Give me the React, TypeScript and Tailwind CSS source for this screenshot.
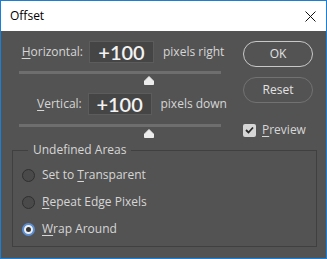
import { useState } from "react"

const Thumb = () => (
    <svg width="10" height="9" viewBox="0 0 10 9" className="block">
        <path d="M5 0.5 L9.5 5 L9.5 8.5 L0.5 8.5 L0.5 5 Z" fill="#ececec" stroke="#ececec" strokeWidth="1" strokeLinejoin="round" />
    </svg>
)

const OffsetRow = ({ label, hot, unit }: { label: string; hot: string; unit: string }) => (
    <div className="flex items-center h-[22px] whitespace-nowrap">
        <span className="w-[63px] text-right text-[12px] text-[#d6d6d6]">
            <span className="underline underline-offset-2">{hot}</span>
            {label}
        </span>
        <div className="ml-[6px] w-[65px] h-[22px] bg-[#454545] border border-[#5c5c5c] flex items-center justify-center text-[20px] leading-none font-semibold text-[#f2f2f2] [font-family:Lato,sans-serif]">
            +100
        </div>
        <span className="ml-[9px] text-[12px] text-[#d6d6d6]">{unit}</span>
    </div>
)

const Slider = () => (
    <div className="flex flex-col">
        <div className="h-[3px] w-[202px] bg-[#6e6e6e]" />
        <div className="mt-[2px] ml-[125px]">
            <Thumb />
        </div>
    </div>
)

const Radio = ({ checked }: { checked?: boolean }) =>
    checked ? (
        <div className="w-[13px] h-[13px] rounded-full bg-[#f0f0f0] border-[2px] border-[#5b8fd6] flex items-center justify-center">
            <div className="w-[5px] h-[5px] rounded-full bg-[#333333]" />
        </div>
    ) : (
        <div className="w-[13px] h-[13px] rounded-full bg-[#4a4a4a] border border-[#2f2f2f]" />
    )

const App = () => {
    const [mode] = useState("wrap")

    const options = [
        { id: "transparent", pre: "Set to ", hot: "T", rest: "ransparent" },
        { id: "repeat", pre: "", hot: "R", rest: "epeat Edge Pixels" },
        { id: "wrap", pre: "", hot: "W", rest: "rap Around" },
    ]

    return (
        <div className="w-[327px] h-[259px] border border-[#1c7fd6] flex flex-col [font-family:'Open_Sans',sans-serif]">
            <div className="h-[30px] bg-white flex items-center justify-between pl-[9px] pr-[10px]">
                <span className="text-[12px] text-black">Offset</span>
                <svg width="11" height="11" viewBox="0 0 11 11">
                    <path d="M0.5 0.5 L10.5 10.5 M10.5 0.5 L0.5 10.5" stroke="#111" strokeWidth="1" />
                </svg>
            </div>
            <div className="flex-1 bg-[#535353] pt-[10px]">
                <div className="flex h-[109px]">
                    <div className="ml-[18px] w-[208px] flex flex-col">
                        <div className="ml-[1px]">
                            <OffsetRow hot="H" label="orizontal:" unit="pixels right" />
                        </div>
                        <div className="mt-[8px]">
                            <Slider />
                        </div>
                        <div className="mt-[8px] ml-[1px]">
                            <OffsetRow hot="V" label="ertical:" unit="pixels down" />
                        </div>
                        <div className="mt-[9px]">
                            <Slider />
                        </div>
                    </div>
                    <div className="ml-[16px] flex flex-col">
                        <button className="w-[70px] h-[26px] rounded-full border border-[#c8c8c8] text-[12px] text-[#e2e2e2]">OK</button>
                        <button className="mt-[10px] w-[70px] h-[26px] rounded-full border border-[#727272] text-[12px] text-[#e2e2e2]">Reset</button>
                        <div className="mt-[18px] flex items-center">
                            <div className="w-[13px] h-[13px] rounded-[2px] bg-[#d6d6d6] flex items-center justify-center">
                                <svg width="9" height="8" viewBox="0 0 9 8">
                                    <path d="M1 4 L3.5 6.5 L8 1.5" fill="none" stroke="#2a2a2a" strokeWidth="1.8" />
                                </svg>
                            </div>
                            <span className="ml-[6px] text-[12px] text-[#d6d6d6]">
                                <span className="underline underline-offset-2">P</span>review
                            </span>
                        </div>
                    </div>
                </div>
                <div className="relative ml-[11px] w-[305px] h-[97px] border border-[#404040]">
                    <span className="absolute -top-[10px] left-[15px] px-[5px] bg-[#535353] text-[12px] text-[#d6d6d6]">Undefined Areas</span>
                    <div className="pt-[14px] pl-[9px] flex flex-col gap-[7px]">
                        {options.map((o) => (
                            <div key={o.id} className="h-[20px] flex items-center">
                                <Radio checked={mode === o.id} />
                                <span className="ml-[7px] text-[12px] text-[#d6d6d6]">
                                    {o.pre}
                                    <span className="underline underline-offset-2">{o.hot}</span>
                                    {o.rest}
                                </span>
                            </div>
                        ))}
                    </div>
                </div>
            </div>
        </div>
    )
}

export default App
